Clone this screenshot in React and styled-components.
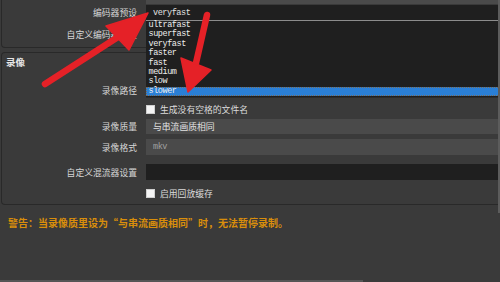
import styled, { createGlobalStyle } from "styled-components";

const GlobalStyle = createGlobalStyle`
  html, body {
    margin: 0;
    padding: 0;
    background: #3a3a3a;
  }
`;

const CJK = `"Noto Sans CJK SC", "Noto Sans", sans-serif`;
const MONO = `"Liberation Mono", "DejaVu Sans Mono", monospace`;

const Page = styled.div`
  position: relative;
  width: 500px;
  height: 282px;
  overflow: hidden;
  background: #3a3a3a;
  font-family: ${CJK};
  color: #dcdcdc;
  padding-left: 1px;
  box-sizing: border-box;
`;

const GroupBox = styled.div`
  display: flex;
  flex-direction: column;
  border: 1px solid #292929;
  border-right: none;
  border-top: ${(p) => (p.$cut ? "none" : "1px solid #292929")};
  border-radius: ${(p) => (p.$cut ? "0 0 0 4px" : "4px 0 0 4px")};
  margin-top: ${(p) => p.$mt || 0}px;
  padding-bottom: ${(p) => p.$pb || 0}px;
`;

const Header = styled.div`
  height: 18px;
  line-height: 18px;
  padding-left: 4px;
  font-size: 9.5px;
  font-weight: 700;
  color: #e6e6e6;
`;

const Row = styled.div`
  display: grid;
  grid-template-columns: 135px 1fr;
  column-gap: 9px;
  align-items: center;
  height: ${(p) => p.$h}px;
  margin-top: ${(p) => p.$mt || 0}px;
`;

const Label = styled.div`
  text-align: right;
  font-size: 8.8px;
  white-space: nowrap;
  color: #d6d6d6;
`;

const Field = styled.div`
  height: 100%;
  background: ${(p) => (p.$dark ? "#1f1f1f" : "#4a4a4a")};
  display: flex;
  align-items: center;
  padding-left: 7px;
  font-size: 8.8px;
  color: ${(p) => (p.$dim ? "#a0a0a0" : "#e2e2e2")};
  font-family: ${(p) => (p.$mono ? MONO : CJK)};
  ${(p) => p.$mono && "font-size: 8.5px; letter-spacing: -0.43px;"}
`;

const CheckLine = styled.div`
  display: flex;
  align-items: center;
  gap: 5px;
  font-size: 8.8px;
  color: #dcdcdc;
`;

const Box = styled.span`
  width: 9px;
  height: 9px;
  background: #f4f4f4;
  box-sizing: border-box;
  border: 1px solid #cfcfcf;
`;

const Warning = styled.div`
  margin-top: 12px;
  padding-left: 7px;
  height: 12px;
  line-height: 12px;
  font-size: 10px;
  font-weight: 700;
  color: #d98e0b;
  white-space: nowrap;
`;

const Dropdown = styled.div`
  position: absolute;
  left: 146px;
  top: 20px;
  width: 354px;
  background: #1f1f1f;
  border-top: 1px solid #8c8c8c;
  border-bottom: 1px solid #2c2c2c;
  padding-bottom: 0.4px;
  font-family: ${MONO};
  font-size: 8.5px;
  letter-spacing: -0.43px;
  color: #eeeeee;
`;

const Item = styled.div`
  height: 9.4px;
  line-height: 9.4px;
  padding-left: 2.5px;
  box-sizing: border-box;
  background: ${(p) => (p.$active ? "#2a7fd6" : "transparent")};
  ${(p) => p.$active && "outline: 1px dotted #7a6a55; outline-offset: -1px;"}
`;

const VScroll = styled.div`
  position: absolute;
  right: 0;
  top: 0;
  width: 2px;
  height: 213px;
  background: #5c5c5c;
`;

const HScroll = styled.div`
  position: absolute;
  left: 0;
  bottom: 0;
  width: 363px;
  height: 2px;
  background: #555555;
`;

const Overlay = styled.svg`
  position: absolute;
  left: 0;
  top: 0;
  pointer-events: none;
`;

const presets = [
  "ultrafast",
  "superfast",
  "veryfast",
  "faster",
  "fast",
  "medium",
  "slow",
  "slower",
];

const Arrows = () => (
  <Overlay width="500" height="282" viewBox="0 0 500 282">
    <g fill="#e52127" stroke="#e52127" strokeLinecap="round" strokeLinejoin="round">
      <line x1="45" y1="84" x2="118" y2="37" strokeWidth="6.5" />
      <polygon points="148,13 106,26 129,50" strokeWidth="1.5" />
      <line x1="207" y1="15" x2="196" y2="63" strokeWidth="6.5" />
      <polygon points="188,92 181,58 211,70" strokeWidth="1.5" />
    </g>
  </Overlay>
);

export default function App() {
  return (
    <Page>
      <GlobalStyle />
      <GroupBox $cut $pb={5}>
        <Row $h={4}>
          <span />
          <Field />
        </Row>
        <Row $h={15} $mt={1}>
          <Label>编码器预设</Label>
          <Field $dark $mono>
            veryfast
          </Field>
        </Row>
        <Row $h={15} $mt={7}>
          <Label>自定义编码器设置</Label>
          <Field />
        </Row>
      </GroupBox>

      <GroupBox $mt={4} $pb={8}>
        <Header>录像</Header>
        <Row $h={14} $mt={12}>
          <Label>录像路径</Label>
          <Field />
        </Row>
        <Row $h={9} $mt={6}>
          <span />
          <CheckLine>
            <Box />
            生成没有空格的文件名
          </CheckLine>
        </Row>
        <Row $h={15} $mt={7}>
          <Label>录像质量</Label>
          <Field>与串流画质相同</Field>
        </Row>
        <Row $h={16} $mt={5}>
          <Label>录像格式</Label>
          <Field $mono $dim>
            mkv
          </Field>
        </Row>
        <Row $h={16} $mt={9}>
          <Label>自定义混流器设置</Label>
          <Field $dark />
        </Row>
        <Row $h={9} $mt={7}>
          <span />
          <CheckLine>
            <Box />
            启用回放缓存
          </CheckLine>
        </Row>
      </GroupBox>

      <Warning>警告：当录像质里设为“与串流画质相同”时，无法暂停录制。</Warning>

      <Dropdown>
        {presets.map((p, i) => (
          <Item key={p} $active={i === presets.length - 1}>
            {p}
          </Item>
        ))}
      </Dropdown>

      <VScroll />
      <HScroll />
      <Arrows />
    </Page>
  );
}
